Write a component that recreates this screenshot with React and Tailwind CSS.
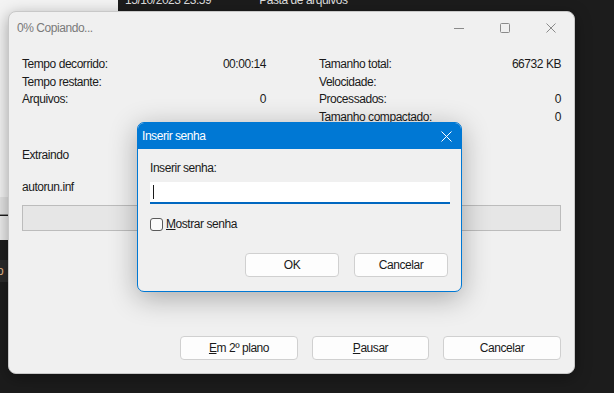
import React from 'react';

const FONT = { fontFamily: '"Liberation Sans", Arial, sans-serif' };

function WinButton({ children, className = '' }) {
  return (
    <div
      className={`h-[24px] flex items-center justify-center rounded-[4px] border border-[#d0d0d0] bg-[#fdfdfd] text-[12px] text-[#1a1a1a] ${className}`}
    >
      {children}
    </div>
  );
}

function StatRow({ label, value }) {
  return (
    <div className="flex h-[17.7px] items-center justify-between">
      <span>{label}</span>
      <span>{value}</span>
    </div>
  );
}

export default function App() {
  return (
    <div className="relative w-[614px] h-[393px] overflow-hidden bg-[#1c1c1c] tracking-[-0.45px]" style={FONT}>
      {/* background window pieces */}
      <div className="absolute left-0 top-0 w-[118px] h-[197px] bg-[#f3f3f3]" />
      <div className="absolute left-0 top-[197px] w-[118px] h-[18px] bg-[#e4e4e4] border-b border-[#8c8c8c]" />
      <div className="absolute left-0 top-[216px] w-[118px] h-[24px] bg-[#ececec]" />
      <div className="absolute left-0 top-[260px] w-[118px] h-[22px] bg-[#2b2b2b] text-[12px] text-[#e8b98a] leading-[22px]">
        <span className="-ml-[3px]">o</span>
      </div>
      <div className="absolute left-[118px] top-[-7px] flex text-[12px] text-[#dcdcdc] leading-[14px]">
        <span className="ml-[7px]">15/10/2023 23:59</span>
        <span className="ml-[48px]">Pasta de arquivos</span>
      </div>

      {/* main progress window */}
      <div className="absolute left-[8px] top-[11px] w-[567px] h-[363px] rounded-[8px] bg-[#f0f0f0] border border-[#c8c8c8] shadow-[0_4px_16px_rgba(0,0,0,0.35)] flex flex-col text-[12px] text-[#1a1a1a]">
        {/* title bar */}
        <div className="flex h-[31px] items-center pl-[8px]">
          <span className="text-[#7a7a7a] text-[12px] flex-1">0% Copiando...</span>
          <div className="flex items-center h-full">
            <div className="w-[46px] h-full flex items-center justify-center">
              <svg width="10" height="10" viewBox="0 0 10 10">
                <path d="M0 5.5h10" stroke="#8a8a8a" strokeWidth="1" />
              </svg>
            </div>
            <div className="w-[46px] h-full flex items-center justify-center">
              <svg width="10" height="10" viewBox="0 0 10 10">
                <rect x="0.5" y="0.5" width="9" height="9" rx="1" fill="none" stroke="#8a8a8a" strokeWidth="1" />
              </svg>
            </div>
            <div className="w-[46px] h-full flex items-center justify-center">
              <svg width="10" height="10" viewBox="0 0 10 10">
                <path d="M0.5 0.5l9 9M9.5 0.5l-9 9" stroke="#8a8a8a" strokeWidth="1" />
              </svg>
            </div>
          </div>
        </div>

        {/* stats */}
        <div className="flex pl-[13px] pr-[13px] pt-[12px]">
          <div className="w-[244px] flex flex-col">
            <StatRow label="Tempo decorrido:" value="00:00:14" />
            <StatRow label="Tempo restante:" value="" />
            <StatRow label="Arquivos:" value="0" />
          </div>
          <div className="ml-[53px] flex-1 flex flex-col">
            <StatRow label="Tamanho total:" value="66732 KB" />
            <StatRow label="Velocidade:" value="" />
            <StatRow label="Processados:" value="0" />
            <StatRow label="Tamanho compactado:" value="0" />
          </div>
        </div>

        <div className="pl-[13px] mt-[20px]">Extraindo</div>
        <div className="pl-[13px] mt-[14px]">autorun.inf</div>
        <div className="mx-[13px] mt-[9px] h-[26px] bg-[#e6e6e6] border border-[#bcbcbc]" />

        <div className="mt-auto mb-[13px] flex justify-end gap-[14px] pr-[13px]">
          <WinButton className="w-[118px]">
            <span><span className="underline">E</span>m 2º plano</span>
          </WinButton>
          <WinButton className="w-[117px]">
            <span><span className="underline">P</span>ausar</span>
          </WinButton>
          <WinButton className="w-[118px]">Cancelar</WinButton>
        </div>
      </div>

      {/* password dialog */}
      <div className="absolute left-[137px] top-[122px] w-[325px] h-[170px] rounded-[7px] border border-[#0078d4] bg-[#f0f0f0] shadow-[0_6px_28px_rgba(0,0,0,0.3)] flex flex-col overflow-hidden text-[12px] text-[#1a1a1a]">
        <div className="h-[26px] bg-[#0078d4] flex items-center pl-[4px] pr-[9px] text-white text-[12px]">
          <span className="flex-1">Inserir senha</span>
          <svg width="11" height="11" viewBox="0 0 11 11">
            <path d="M0.5 0.5l10 10M10.5 0.5l-10 10" stroke="#ffffff" strokeWidth="1" />
          </svg>
        </div>
        <div className="flex flex-col px-[12px] pt-[12px]">
          <span className="leading-[14px]">Inserir senha:</span>
          <div className="mt-[7px] w-[300px] h-[22px] bg-white border-b-2 border-[#0067c0] flex items-center pl-[3px]">
            <div className="w-px h-[14px] bg-[#1a1a1a]" />
          </div>
          <div className="mt-[11px] flex items-center gap-[3px]">
            <div className="w-[13px] h-[13px] rounded-[3px] border border-[#5a5a5a] bg-[#fafafa]" />
            <span><span className="underline">M</span>ostrar senha</span>
          </div>
          <div className="mt-[20px] flex justify-end gap-[15px] pr-[1px]">
            <WinButton className="w-[94px] border-[#0067c0]">OK</WinButton>
            <WinButton className="w-[94px]">Cancelar</WinButton>
          </div>
        </div>
      </div>
    </div>
  );
}
